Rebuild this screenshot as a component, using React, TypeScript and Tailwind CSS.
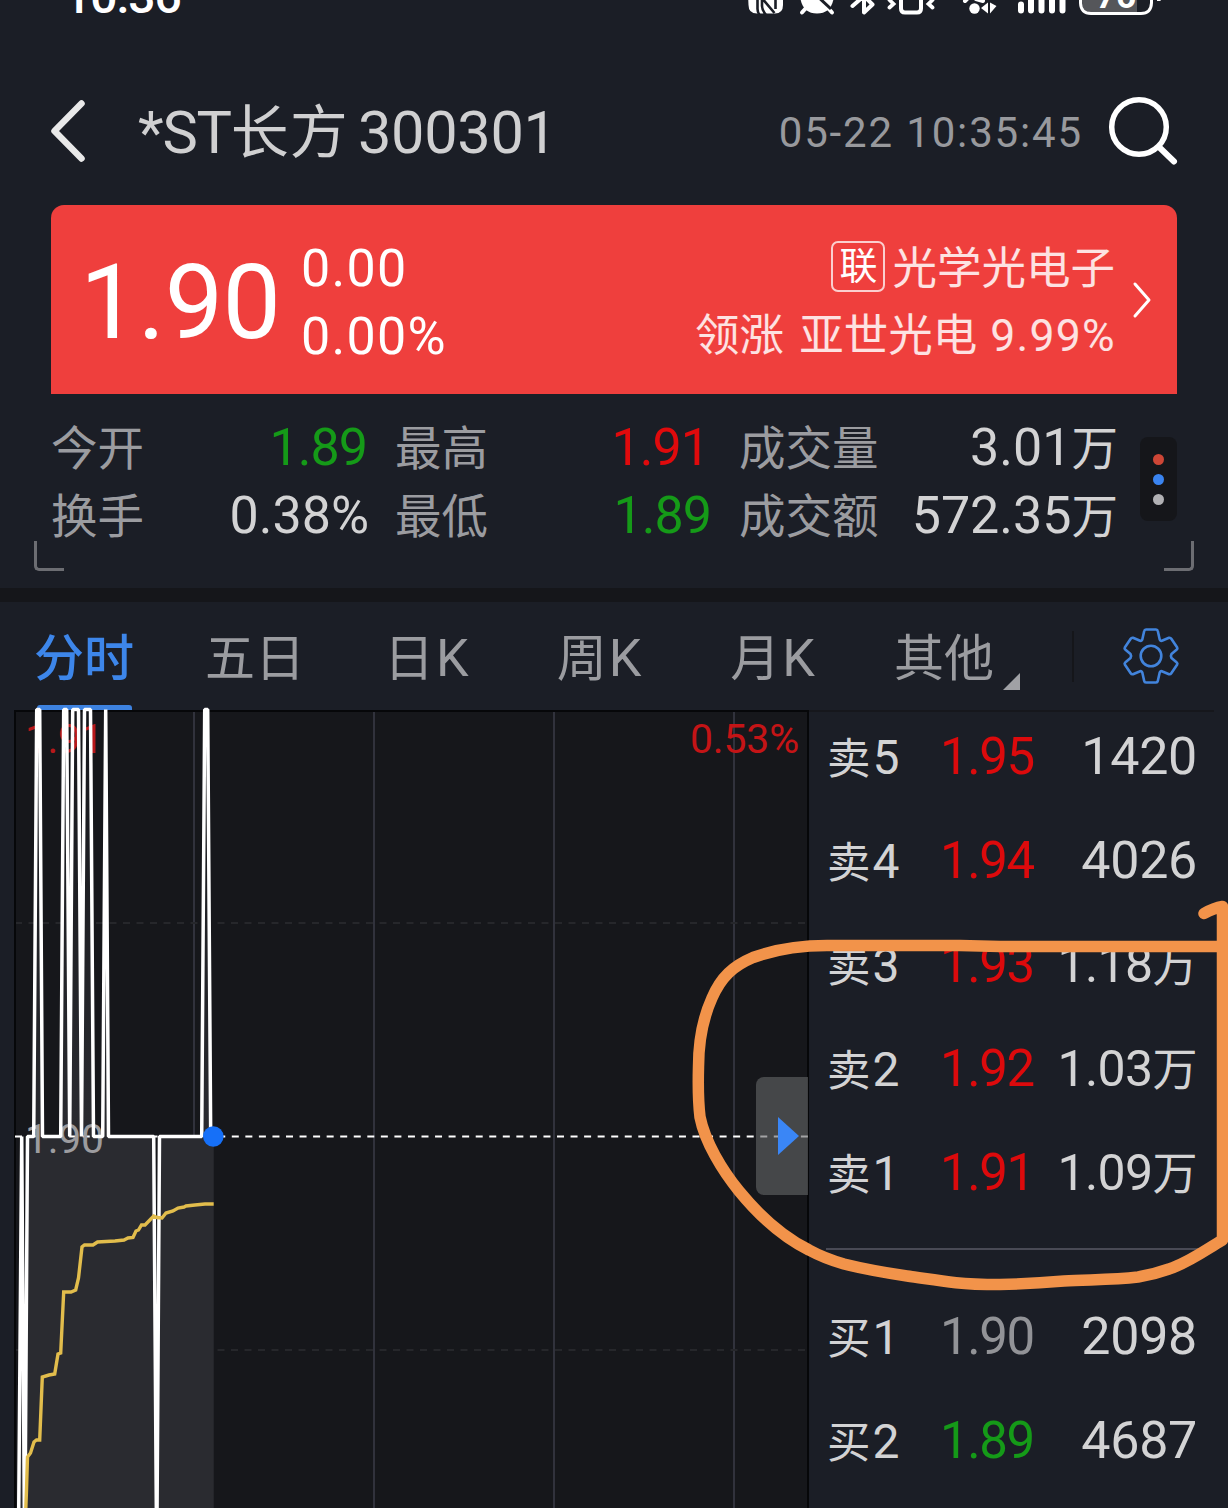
const stats = [
  [
    { label: "今开", value: "1.89", unit: "", color: "text-[#159a18] mr-[2px] -tracking-[1px]" },
    { label: "换手", value: "0.38%", unit: "", color: "text-[#d3d3d4]" },
  ],
  [
    { label: "最高", value: "1.91", unit: "", color: "text-[#e00a0c] mr-[2px] -tracking-[1px]" },
    { label: "最低", value: "1.89", unit: "", color: "text-[#159a18] -tracking-[1px]" },
  ],
  [
    { label: "成交量", value: "3.01", unit: "万", color: "text-[#d3d3d4]" },
    { label: "成交额", value: "572.35", unit: "万", color: "text-[#d3d3d4]" },
  ],
];

const statWidths = ["w-[318px]", "ml-[26px] w-[316px]", "ml-[28px] w-[379px]"];

const tabs = [
  { name: "五日", suffix: "", className: "ml-[71px]" },
  { name: "日", suffix: "K", className: "ml-[79px]" },
  { name: "周", suffix: "K", className: "ml-[88px]" },
  { name: "月", suffix: "K", className: "ml-[89px]" },
  { name: "其他", suffix: "", className: "ml-[79px]" },
];

const asks = [
  { side: "卖", level: 5, price: "1.95", volume: "1420", unit: "" },
  { side: "卖", level: 4, price: "1.94", volume: "4026", unit: "" },
  { side: "卖", level: 3, price: "1.93", volume: "1.18", unit: "万" },
  { side: "卖", level: 2, price: "1.92", volume: "1.03", unit: "万" },
  { side: "卖", level: 1, price: "1.91", volume: "1.09", unit: "万" },
];

const bids = [
  { side: "买", level: 1, price: "1.90", volume: "2098", unit: "" },
  { side: "买", level: 2, price: "1.89", volume: "4687", unit: "" },
];

function priceColor(price: string) {
  const p = Number(price);
  if (p > 1.9) return "text-[#dc0a0c] -tracking-[1.400px]";
  if (p < 1.9) return "text-[#159a18] -tracking-[1.400px]";
  return "text-[#929397] -tracking-[1.400px]";
}

function StatusIcons() {
  return (
    <svg className="shrink-0 overflow-visible" width="430" height="18" viewBox="740 0 430 18" fill="none">
      {/* nfc */}
      <path d="M748 -6H783V5Q783 13.500 775 13.500H757Q748.500 13.500 748.500 5Z" fill="#fff" />
      <path d="M757.500 -4V9Q757.500 12 759.500 15M762 -1V6Q762 10 766 15M761 -3L774.500 13M775.500 -4V9" stroke="#1b1e26" strokeWidth="2.600" />
      {/* alarm */}
      <path d="M800 -4H834Q832 13.500 817 13.500Q802 13.500 800 -4Z" fill="#fff" />
      <path d="M806 8L802 12.500M828 8L832 12.500" stroke="#fff" strokeWidth="4" strokeLinecap="round" />
      <path d="M816 -5L831 9" stroke="#1b1e26" strokeWidth="3" />
      {/* bluetooth */}
      <path d="M852.500 6L864 -4L872.500 4.500L864 12.500V-4" stroke="#fff" strokeWidth="4" strokeLinecap="round" strokeLinejoin="round" />
      {/* vibrate */}
      <path d="M901 -6V8.500Q901 12.500 905 12.500H917Q921 12.500 921 8.500V-6" stroke="#fff" strokeWidth="4" />
      <path d="M889.500 0L893.500 4L889.500 7.500M932.500 0L928.500 4L932.500 7.500" stroke="#fff" strokeWidth="3.800" strokeLinecap="round" />
      {/* hotspot */}
      <circle cx="974.500" cy="8.500" r="5.200" fill="#fff" />
      <path d="M965 1L967 -1M976 -1L983 1" stroke="#fff" strokeWidth="4" strokeLinecap="round" />
      <path d="M981 8L988 2.500V13.500ZM990 2.500V13.500L996.500 6Z" fill="#fff" />
      {/* signal */}
      <path d="M1021 4.500V10.500M1031 -6V10.500M1041.500 -6V10.500M1052 -6V10.500M1062.500 -6V10.500" stroke="#fff" strokeWidth="6" strokeLinecap="round" />
      {/* battery */}
      <path d="M1082 -10H1137V12H1089Q1082 11 1082 2Z" fill="#55565a" />
      <path d="M1080.500 -10V3Q1081 13.500 1091 13.500H1141Q1151 13.500 1151.500 3V-10" stroke="#fff" strokeWidth="3" />
      <path d="M1157 -3Q1161.500 -2 1160.500 1H1157Z" fill="#fff" />
      <text x="1096" y="8" fill="#fff" fontSize="35" fontWeight="700">76</text>
    </svg>
  );
}

function Header() {
  return (
    <header>
      <div className="flex h-[88px] items-start justify-between pl-[64px] pr-[58px]">
        <span className="-mt-[27px] text-[48px] font-medium leading-[48px] -tracking-[1px] text-white">10:36</span>
        <StatusIcons />
      </div>
      <div className="flex h-[88px] items-center pl-[48px] pr-[48px]">
        <svg width="40" height="70" viewBox="48 97 40 70" fill="none">
          <path d="M81.500 103.500L54.500 131L81.500 158.500" stroke="#e9e9e9" strokeWidth="6.500" strokeLinecap="round" strokeLinejoin="round" />
        </svg>
        <h1 className="ml-[50px] mt-px whitespace-nowrap text-[59.500px] leading-[88px] text-[#d0d0d1]">
          <span className="-tracking-[1.200px]">*ST</span>
          <span className="text-[58px] leading-none tracking-[1px]">长方</span>
          <span className="ml-[9px] -tracking-[0.300px]">300301</span>
        </h1>
        <span className="ml-auto mt-[2px] whitespace-nowrap text-[42px] leading-[88px] tracking-[1.850px] text-[#98999d]">
          05-22 10:35:45
        </span>
        <svg className="ml-[23px]" width="74" height="76" viewBox="1106 94 74 76" fill="none">
          <circle cx="1139" cy="127" r="27.300" stroke="#fff" strokeWidth="5.500" />
          <path d="M1159 147L1174 161.500" stroke="#fff" strokeWidth="6" strokeLinecap="round" />
        </svg>
      </div>
    </header>
  );
}

function QuoteCard() {
  return (
    <section className="mx-[51px] mt-[29px] flex h-[189px] items-center rounded-t-[13px] bg-[#ef3f3d] pl-[29px] pr-[25px] pt-[6px] text-white">
      <span className="w-[202px] text-[104px] leading-[105px] -tracking-[0.600px]">1.90</span>
      <div className="ml-[19px] flex flex-col text-[52px] leading-[68px] tracking-[1.300px]">
        <span>0.00</span>
        <span>0.00%</span>
      </div>
      <div className="ml-auto flex flex-col items-end whitespace-nowrap text-[44.500px] leading-[68px] text-white/85">
        <div className="mr-px flex items-center">
          <span className="-mt-[6px] flex h-[51px] w-[54px] items-center justify-center rounded-[7px] border-2 border-white/75 text-[38px] leading-none text-white">
            联
          </span>
          <span className="-mt-px ml-[7px]">光学光电子</span>
        </div>
        <div className="-mt-px flex">
          <span>领涨</span>
          <span className="ml-[15px]">亚世光电</span>
          <span className="ml-[13px] tracking-[1.300px]">9.99%</span>
        </div>
      </div>
      <svg className="-mt-[6px] ml-[16px]" width="20" height="38" viewBox="0 0 20 38" fill="none">
        <path d="M3 3L17 19L3 35" stroke="#fff" strokeWidth="3" strokeLinecap="round" strokeLinejoin="round" />
      </svg>
    </section>
  );
}

function Stats() {
  return (
    <section className="relative flex h-[194px] items-start pl-[51px] pr-[51px] pt-[20px]">
      {stats.map((column, i) => (
        <div key={i} className={statWidths[i]}>
          {column.map((s) => (
            <div key={s.label} className="flex justify-between whitespace-nowrap text-[52px] leading-[68px]">
              <span className="text-[#9b9ca0]">
                <span className="text-[46.500px] leading-none">{s.label}</span>
              </span>
              <span className={s.color}>
                {s.value}
                <span className="text-[46.500px] leading-none">{s.unit}</span>
              </span>
            </div>
          ))}
        </div>
      ))}
      <div className="ml-auto mt-[23px] flex h-[84px] w-[37px] flex-col items-center justify-center gap-[9px] rounded-[8px] bg-[#15161a]">
        <i className="size-[11px] rounded-full bg-[#cd4636]" />
        <i className="size-[11px] rounded-full bg-[#3a84f0]" />
        <i className="size-[11px] rounded-full bg-[#b1b1b4]" />
      </div>
      <i className="absolute bottom-[17px] left-[34px] size-[30px] rounded-bl-[5px] border-b-[3px] border-l-[3px] border-[#6c6d72]" />
      <i className="absolute bottom-[17px] right-[34px] size-[30px] rounded-br-[5px] border-b-[3px] border-r-[3px] border-[#6c6d72]" />
    </section>
  );
}

function Tabs() {
  return (
    <nav className="flex h-[108px] items-center whitespace-nowrap pl-[34px] pr-[46px] text-[52px] text-[#9b9ca0]">
      <div className="relative flex h-full items-center pt-[6px] text-[50px] font-medium leading-[68px] text-[#3d86ea]">
        分时
        <i className="absolute bottom-0 left-[3px] h-[5px] w-[95px] rounded-t-[3px] bg-[#3d82e0]" />
      </div>
      {tabs.map((tab) => (
        <div key={tab.name} className={tab.className}>
          <span className="relative top-[3px] leading-[68px]">
            <span className="text-[50px] leading-none">{tab.name}</span>
            {tab.suffix && <span className="ml-[2px]">{tab.suffix}</span>}
          </span>
        </div>
      ))}
      <svg className="ml-[9px] mt-[51px]" width="17" height="17" viewBox="0 0 17 17">
        <path d="M17 0V17H0Z" fill="#a0a1a5" />
      </svg>
      <i className="ml-[52px] h-[51px] w-[2px] bg-[#15161a]" />
      <svg className="ml-auto" width="62" height="62" viewBox="-31 -31 62 62" fill="none" stroke="#4284dc" strokeWidth="2.600" strokeLinejoin="round">
        <path d="M-5 -26.500H5Q6.500 -26.500 6.800 -25L8.700 -16.500Q9.500 -14.500 11.500 -15.500L18 -18.200Q19.500 -18.500 20.300 -17.300L26.200 -8.500Q26.800 -7.300 25.800 -6.500L20.500 -2Q19.300 0 20.500 2L25.800 6.500Q26.800 7.300 26.200 8.500L20.300 17.300Q19.500 18.500 18 18.200L11.500 15.500Q9.500 14.500 8.700 16.500L6.800 25Q6.500 26.500 5 26.500H-5Q-6.500 26.500 -6.800 25L-8.700 16.500Q-9.500 14.500 -11.500 15.500L-18 18.200Q-19.500 18.500 -20.300 17.300L-26.200 8.500Q-26.800 7.300 -25.800 6.500L-20.500 2Q-19.300 0 -20.500 -2L-25.800 -6.500Q-26.800 -7.300 -26.200 -8.500L-20.300 -17.300Q-19.500 -18.500 -18 -18.200L-11.500 -15.500Q-9.500 -14.500 -8.700 -16.500L-6.800 -25Q-6.500 -26.500 -5 -26.500Z" />
        <circle r="10.300" />
      </svg>
    </nav>
  );
}

// minute line, y 709.5 = 1.91, 1136.5 = 1.90, 1563 = 1.89
const priceLine =
  "18.3,1563 21.7,1136.5 24.7,1563 27.5,1136.5 33.7,1136.5 36.7,709.5 39.7,709.5 42.5,1136.5 60.7,1136.5 63.7,709.5 66.7,709.5 69.7,1136.5 72.7,709.5 78.5,709.5 81.5,1136.5 84.5,709.5 90.5,709.5 93.5,1136.5 102.7,1136.5 105.7,709.5 108.5,1136.5 153.7,1136.5 156.7,1563 159.5,1136.5 201.7,1136.5 204.7,709.5 207.7,709.5 210.7,1136.5 213.7,1136.5";

const averageLine =
  "25,1530 26.5,1490 27.5,1457 30.5,1453 34,1442 36.5,1440 39.7,1440 42.3,1377 49,1375 54.7,1374 58,1354 60.7,1353 63.7,1292 71,1292 75.7,1290 78.5,1278 82,1247 84.5,1245 93,1245 97.5,1242 115,1241 124,1240 128,1238 133,1237.5 136,1231 138.5,1230 141.5,1225 145,1225 153.7,1216 157,1217.5 162,1218 166,1213 173,1211 178,1208 184,1207 186,1206 195,1205 205,1204 213.7,1204";

function Chart() {
  return (
    <div className="relative h-[798px] w-[795px] bg-[#16171b]">
      <svg className="block overflow-visible" width="795" height="798" viewBox="14 710 795 798" fill="none">
        <defs>
          <linearGradient id="area" gradientUnits="userSpaceOnUse" x1="0" y1="710" x2="0" y2="1136">
            <stop offset="0" stopColor="#16171b" />
            <stop offset="1" stopColor="#2a2b30" />
          </linearGradient>
        </defs>
        <path d="M194 711V1508M374 711V1508M554 711V1508M734 711V1508" stroke="#31323c" strokeWidth="2" />
        <path d="M15 923H808M15 1350H808" stroke="#26272b" strokeWidth="2" strokeDasharray="7 6.500" />
        <polygon points={`${priceLine} 213.7,1563`} fill="url(#area)" />
        <path d="M15 1508V711H808V1508" stroke="#060709" strokeWidth="2" />
        <path d="M15 1136.500H808" stroke="#fff" strokeWidth="2" strokeDasharray="7 6.550" />
        <text x="25" y="753" fill="#b8181a" fontSize="41" letterSpacing="-0.500">1.91</text>
        <text x="690" y="753" fill="#c41416" fontSize="41" letterSpacing="-0.200">0.53%</text>
        <text x="25" y="1153" fill="#9c9c9f" fontSize="41" letterSpacing="-0.300">1.90</text>
        <polyline points={priceLine} stroke="#fff" strokeWidth="3.500" strokeLinejoin="bevel" />
        <polyline points={averageLine} stroke="#e2bd4c" strokeWidth="3.400" />
        <circle cx="213.300" cy="1136.500" r="10.300" fill="#1670f8" />
      </svg>
      <button className="absolute right-px top-[367px] flex h-[118px] w-[52px] items-center rounded-l-[8px] bg-[#666769]/60 pl-[22px]">
        <svg width="21" height="38" viewBox="0 0 21 38">
          <path d="M0 0L21 19L0 38Z" fill="#3a86f6" />
        </svg>
      </button>
    </div>
  );
}

function BookRow({ row }: { row: (typeof asks)[number] }) {
  return (
    <div className="flex h-[104px] whitespace-nowrap pl-[18px] pr-[31px] text-[51px] leading-[104px] text-[#d3d3d4]">
      <div className="w-[113px]">
        <span className="text-[43.500px] leading-none">{row.side}</span>
        <span className="ml-[2px] text-[48px] leading-none">{row.level}</span>
      </div>
      <span className={priceColor(row.price)}>{row.price}</span>
      {row.unit ? (
        <span className="ml-auto text-[50px] -tracking-[0.600px]">
          {row.volume}
          <span className="text-[45px] leading-none">{row.unit}</span>
        </span>
      ) : (
        <span className="ml-auto text-[52px] -tracking-[0.300px]">{row.volume}</span>
      )}
    </div>
  );
}

function OrderBook() {
  return (
    <div className="flex-1">
      <div className="mr-[14px] h-[2px] bg-[#16171c]" />
      <div className="-mt-[7px]">
        {asks.map((row) => (
          <BookRow key={row.level} row={row} />
        ))}
      </div>
      <div className="ml-[17px] mr-[14px] mt-[23px] h-[2px] bg-[#494a55]" />
      <div className="mt-[35px]">
        {bids.map((row) => (
          <BookRow key={row.level} row={row} />
        ))}
      </div>
    </div>
  );
}

function Marker() {
  return (
    <svg className="pointer-events-none absolute left-0 top-0" width="1228" height="1508" viewBox="0 0 1228 1508" fill="none">
      <path
        d="M1204 913.500Q1214 908 1222.500 906.500V1240C1204 1251 1188 1263 1169 1269C1158 1273 1150 1275 1138 1277C1112 1280 1088 1279.500 1064 1281C1040 1283 1022 1284 1000 1284.500C980 1284.500 968 1284 956 1282.700C938 1280.500 922 1278 907 1276C884 1272.500 864 1269 844 1264C830 1260 820 1256 809 1250C781 1236 757 1213 739 1191C722 1170 705 1142 700 1117C698 1100 698 1085 698.500 1067C698.500 1040 703 1018 712 998C721 977 733 966 753 957.500C775 949.500 800 945.500 827 945.500H960L1000 946.500H1223"
        stroke="#f2934a"
        strokeWidth="11.500"
        strokeLinecap="round"
        strokeLinejoin="round"
      />
    </svg>
  );
}

export default function App() {
  return (
    <main className="relative h-[1508px] w-[1228px] overflow-hidden bg-[#1b1e26] font-['Roboto','Noto_Sans_CJK_SC',sans-serif]">
      <Header />
      <QuoteCard />
      <Stats />
      <div className="h-[14px] bg-[#15161a]" />
      <Tabs />
      <div className="flex pl-[14px]">
        <Chart />
        <OrderBook />
      </div>
      <Marker />
    </main>
  );
}
